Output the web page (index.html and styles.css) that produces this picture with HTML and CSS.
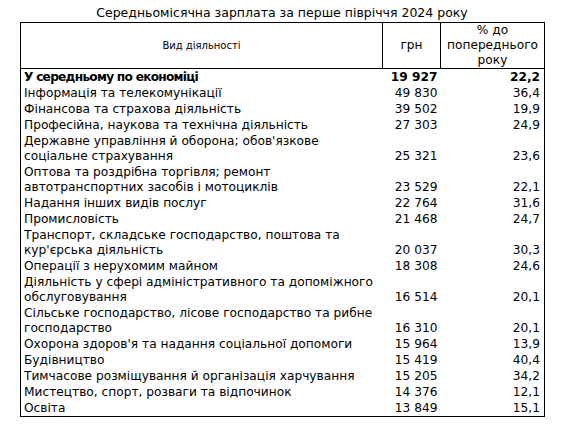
FILE: index.html
```html
<!DOCTYPE html>
<html lang="uk">
<head>
<meta charset="utf-8">
<title>Середньомісячна зарплата</title>
<link rel="stylesheet" href="styles.css">
</head>
<body>
<div class="wrap">
  <div class="title">Середньомісячна зарплата за перше півріччя 2024 року</div>
  <table class="data">
    <colgroup>
      <col class="c-name">
      <col class="c-uah">
      <col class="c-pct">
    </colgroup>
    <thead>
      <tr>
        <th class="h-name">Вид діяльності</th>
        <th class="h-num">грн</th>
        <th class="h-num">% до<br>попереднього<br>року</th>
      </tr>
    </thead>
    <tbody>
      <tr class="total"><td class="name">У середньому по економіці</td><td class="n">19 927</td><td class="p">22,2</td></tr>
      <tr><td class="name">Інформація та телекомунікації</td><td class="n">49 830</td><td class="p">36,4</td></tr>
      <tr><td class="name">Фінансова та страхова діяльність</td><td class="n">39 502</td><td class="p">19,9</td></tr>
      <tr><td class="name">Професійна, наукова та технічна діяльність</td><td class="n">27 303</td><td class="p">24,9</td></tr>
      <tr><td class="name">Державне управління й оборона; обов'язкове<br>соціальне страхування</td><td class="n">25 321</td><td class="p">23,6</td></tr>
      <tr><td class="name">Оптова та роздрібна торгівля; ремонт<br>автотранспортних засобів і мотоциклів</td><td class="n">23 529</td><td class="p">22,1</td></tr>
      <tr><td class="name">Надання інших видів послуг</td><td class="n">22 764</td><td class="p">31,6</td></tr>
      <tr><td class="name">Промисловість</td><td class="n">21 468</td><td class="p">24,7</td></tr>
      <tr><td class="name">Транспорт, складське господарство, поштова та<br>кур'єрська діяльність</td><td class="n">20 037</td><td class="p">30,3</td></tr>
      <tr><td class="name">Операції з нерухомим майном</td><td class="n">18 308</td><td class="p">24,6</td></tr>
      <tr><td class="name">Діяльність у сфері адміністративного та допоміжного<br>обслуговування</td><td class="n">16 514</td><td class="p">20,1</td></tr>
      <tr><td class="name">Сільське господарство, лісове господарство та рибне<br>господарство</td><td class="n">16 310</td><td class="p">20,1</td></tr>
      <tr><td class="name">Охорона здоров'я та надання соціальної допомоги</td><td class="n">15 964</td><td class="p">13,9</td></tr>
      <tr><td class="name">Будівництво</td><td class="n">15 419</td><td class="p">40,4</td></tr>
      <tr><td class="name">Тимчасове розміщування й організація харчування</td><td class="n">15 205</td><td class="p">34,2</td></tr>
      <tr><td class="name">Мистецтво, спорт, розваги та відпочинок</td><td class="n">14 376</td><td class="p">12,1</td></tr>
      <tr><td class="name">Освіта</td><td class="n">13 849</td><td class="p">15,1</td></tr>
    </tbody>
  </table>
</div>
</body>
</html>
```

FILE: styles.css
```css
html, body {
  margin: 0;
  padding: 0;
  background: #ffffff;
}
body {
  font-family: "DejaVu Sans", Verdana, sans-serif;
  font-size: 12.2px;
  color: #000000;
}
.wrap {
  width: 524px;
  margin-left: 20px;
  padding-top: 4px;
}
.title {
  font-size: 12.5px;
  text-align: center;
  line-height: 17px;
  height: 18px;
}
.data {
  width: 524px;
  border-collapse: collapse;
  border: 1px solid #000;
  table-layout: fixed;
}
.c-name { width: 362px; }
.c-uah { width: 58px; }
.c-pct { width: 104px; }
.data th {
  font-weight: normal;
  text-align: center;
  vertical-align: middle;
  border: 1px solid #000;
  line-height: 15px;
  padding: 0 2px;
}
.data th.h-name {
  font-size: 10px;
}
.data td {
  line-height: 15px;
  padding: 1px 3px 0 3px;
  vertical-align: bottom;
}
.data td.name {
  white-space: nowrap;
}
.data td.n,
.data td.p {
  text-align: right;
  white-space: nowrap;
}
.data td.p { padding-right: 4px; }
.total td { font-weight: bold; }
.total td.name { letter-spacing: -0.75px; }
```
